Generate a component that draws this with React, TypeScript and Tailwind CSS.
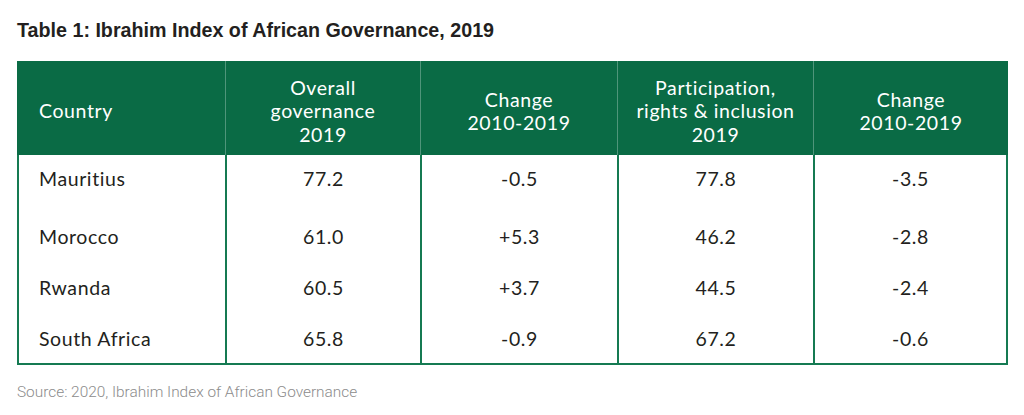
type Row = {
  country: string;
  overall: string;
  change1: string;
  participation: string;
  change2: string;
  pad: string;
};

const rows: Row[] = [
  { country: "Mauritius", overall: "77.2", change1: "-0.5", participation: "77.8", change2: "-3.5", pad: "pt-[12px]" },
  { country: "Morocco", overall: "61.0", change1: "+5.3", participation: "46.2", change2: "-2.8", pad: "pt-[18px]" },
  { country: "Rwanda", overall: "60.5", change1: "+3.7", participation: "44.5", change2: "-2.4", pad: "pt-[17px]" },
  { country: "South Africa", overall: "65.8", change1: "-0.9", participation: "67.2", change2: "-0.6", pad: "pt-[16px]" },
];

const App = () => {
  return (
    <div className="w-[1024px] h-[415px] bg-white pl-[17px] pt-[18px]">
      <h1 className="font-['Liberation_Sans',Arial,sans-serif] font-bold text-[19.7px] leading-[24px] text-[#231f20]">
        Table 1: Ibrahim Index of African Governance, 2019
      </h1>

      <div className="mt-[19px] w-[991px] font-['Lato',sans-serif] text-[#231f20] tracking-[0.6px]">
        {/* header */}
        <div className="grid grid-cols-[208px_195px_197px_196px_195px] h-[94px] bg-[#0a6b45] text-white text-[19.5px] leading-[23.5px]">
          <div className="flex items-center pl-[22px] pt-[6px]">Country</div>
          <div className="flex items-center justify-center text-center border-l border-[#4f957a] pt-[6px]">
            Overall
            <br />
            governance
            <br />
            2019
          </div>
          <div className="flex items-center justify-center text-center border-l border-[#4f957a] pt-[6px]">
            Change
            <br />
            2010-2019
          </div>
          <div className="flex items-center justify-center text-center border-l border-[#4f957a] pt-[6px]">
            Participation,
            <br />
            rights &amp; inclusion
            <br />
            2019
          </div>
          <div className="flex items-center justify-center text-center border-l border-[#4f957a] pt-[6px]">
            Change
            <br />
            2010-2019
          </div>
        </div>

        {/* body */}
        <div className="border-b-2 border-[#157a52]">
          {rows.map((r) => (
            <div
              key={r.country}
              className="grid grid-cols-[208px_195px_197px_196px_195px] h-[52px] text-[19.5px] leading-[24px]"
            >
              <div className={`border-l-2 border-[#157a52] pl-[20px] ${r.pad}`}>{r.country}</div>
              <div className={`border-l-2 border-[#157a52] text-center ${r.pad}`}>{r.overall}</div>
              <div className={`border-l-2 border-[#157a52] text-center ${r.pad}`}>{r.change1}</div>
              <div className={`border-l-2 border-[#157a52] text-center ${r.pad}`}>{r.participation}</div>
              <div className={`border-x-2 border-[#157a52] text-center ${r.pad}`}>{r.change2}</div>
            </div>
          ))}
        </div>
      </div>

      <p className="mt-[17px] font-['Roboto',sans-serif] font-light text-[15.4px] leading-[20px] text-[#8c8c8c]">
        Source: 2020, Ibrahim Index of African Governance
      </p>
    </div>
  );
};

export default App;
